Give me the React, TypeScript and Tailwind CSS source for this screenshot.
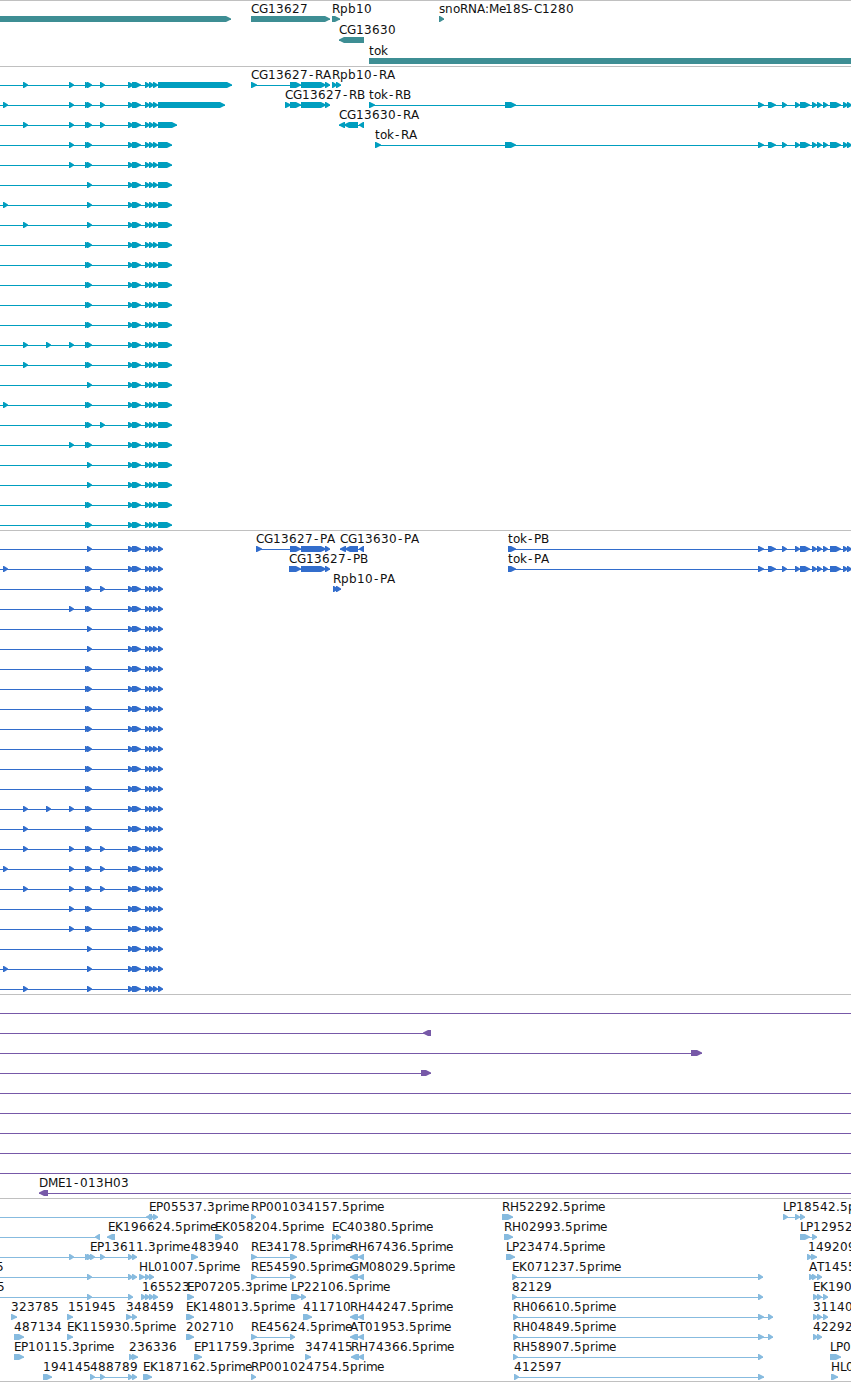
type Span = [number, number];

type Feature = {
  name?: string;
  at?: number;
  spans: Span[];
  reverse?: boolean;
  from?: number;
  to?: number;
  blunt?: boolean;
};

const VIEW = 851;

const ADVANCE: Record<string, number> = {
  C: 8, G: 9, R: 8, P: 7, A: 8, B: 8, N: 9, M: 10, S: 6, D: 9, E: 7, H: 9, K: 8, L: 6, T: 7,
  p: 8, b: 8, r: 5, i: 3, m: 11, e: 6, t: 5, o: 7, k: 7, s: 6, n: 8,
  ".": 4, ":": 4, "-": 7,
};

// letter positions on whole pixels
function positions(name: string, start: number) {
  let x = start;
  return [...name]
    .map((ch) => {
      const here = ch === "-" ? x + 1 : x;
      x += ADVANCE[ch] ?? 8;
      return here;
    })
    .join(" ");
}

function exonPath([a, b]: Span, reverse?: boolean, blunt?: boolean) {
  if (blunt) return `M${a} 14H${b}V20H${a}Z`;
  const tip = Math.min(b - a - 1, 5);
  if (reverse) return `M${b} 14H${a + tip}L${a} 16.5V17.5L${a + tip} 20H${b}Z`;
  return `M${a} 14H${b - tip}L${b} 16.5V17.5L${b - tip} 20H${a}Z`;
}

function Glyph({ feature }: { feature: Feature }) {
  const { name, at, spans, reverse, blunt } = feature;
  const from = feature.from ?? Math.min(...spans.map((s) => s[0]));
  const to = feature.to ?? Math.max(...spans.map((s) => s[1]));
  return (
    <g>
      <rect x={from} y={17} width={to - from} height={1} />
      {spans.map((span, i) => (
        <path key={i} d={exonPath(span, reverse, blunt)} />
      ))}
      {name && (
        <text x={positions(name, at ?? from)} y={11} className="fill-[#111] text-[12px]">
          {name}
        </text>
      )}
    </g>
  );
}

function Track({ rows, color, rowHeight = 20, className }: {
  rows: Feature[][];
  color: string;
  rowHeight?: number;
  className: string;
}) {
  return (
    <section className={`flex flex-col border-t border-[#c0c0c0] pt-px ${className}`}>
      {rows.map((features, i) => (
        <svg
          key={i}
          width={VIEW}
          height={rowHeight}
          className={`block shrink-0 overflow-visible ${color}`}
        >
          {features.map((feature, j) => (
            <Glyph key={j} feature={feature} />
          ))}
        </svg>
      ))}
    </section>
  );
}

const EXONS: Record<string, Span[]> = {
  a: [[3, 8]],
  b: [[23, 28]],
  c: [[46, 51]],
  d: [[69, 74]],
  D: [[85, 90], [87, 92]],
  S: [[87, 92]],
  e: [[100, 105]],
};

const CORE: Span[] = [[128, 134], [132, 141], [145, 150], [149, 154], [153, 158]];

function isoform(code: string, end: number): Feature {
  return { from: 0, spans: [...[...code].flatMap((c) => EXONS[c]), ...CORE, [158, end]] };
}

const TOK: Span[] = [
  [758, 764], [768, 776], [782, 787], [795, 800], [800, 810], [812, 817],
  [817, 822], [823, 828], [830, 841], [843, 848], [847, 852],
];

const CG13627: Span[] = [[290, 301], [301, 326], [325, 330]];

const genes: Feature[][] = [
  [
    { spans: [[0, 231]] },
    { name: "CG13627", spans: [[251, 330]] },
    { name: "Rpb10", spans: [[332, 340]] },
    { name: "snoRNA:Me18S-C1280", spans: [[439, 444]] },
  ],
  [{ name: "CG13630", spans: [[339, 364]], reverse: true }],
  [{ name: "tok", spans: [[369, VIEW]], blunt: true }],
];

const transcriptCodes = [
  "bdDe", "adDe", "bdDe", "dD", "dD", "S", "aS", "bS", "D", "D", "D", "D",
  "D", "bcdD", "bD", "S", "aD", "De", "dD", "S", "S", "D", "D",
];
const transcriptEnds = [232, 225, 177];
const transcripts: Feature[][] = transcriptCodes.map((code, i) => [
  isoform(code, transcriptEnds[i] ?? 172),
]);
transcripts[0].push(
  { name: "CG13627-RA", spans: [[251, 257], ...CG13627] },
  { name: "Rpb10-RA", spans: [[332, 337], [336, 341]] },
);
transcripts[1].push(
  { name: "CG13627-RB", spans: [[285, 291], ...CG13627] },
  { name: "tok-RB", spans: [[369, 375], [505, 516], ...TOK], to: VIEW },
);
transcripts[2].push({
  name: "CG13630-RA", spans: [[339, 345], [344, 358], [359, 364]], reverse: true,
});
transcripts[3].push({ name: "tok-RA", spans: [[375, 381], [505, 516], ...TOK], to: VIEW });

const proteinCodes = [
  "S", "aD", "De", "dD", "S", "S", "D", "D", "D", "D", "D", "D", "D",
  "bcdD", "bD", "bdDe", "adDe", "bdDe", "dD", "dD", "S", "aS", "bS",
];
const proteins: Feature[][] = proteinCodes.map((code) => [isoform(code, 163)]);
proteins[0].push(
  { name: "CG13627-PA", spans: [[256, 262], ...CG13627] },
  { name: "CG13630-PA", spans: [[340, 346], [345, 358], [359, 364]], reverse: true },
  { name: "tok-PB", spans: [[508, 516], ...TOK], to: VIEW },
);
proteins[1].push(
  { name: "CG13627-PB", spans: [[289, 301], [301, 326], [325, 330]] },
  { name: "tok-PA", spans: [[508, 516], ...TOK], to: VIEW },
);
proteins[2].push({ name: "Rpb10-PA", spans: [[333, 338], [336, 341]] });

const through: Feature = { spans: [], from: 0, to: VIEW };
const clones: Feature[][] = [
  [through],
  [{ from: 0, spans: [[423, 431]], reverse: true }],
  [{ from: 0, spans: [[691, 702]] }],
  [{ from: 0, spans: [[421, 431]] }],
  [through],
  [through],
  [through],
  [through],
  [through],
  [{ name: "DME1-013H03", spans: [[39, 48]], to: VIEW, reverse: true }],
];

const ests: Feature[][] = [
  [
    { from: 0, spans: [[146, 152]], reverse: true },
    { name: "EP05537.3prime", at: 149, spans: [[149, 154], [153, 158]] },
    { name: "RP001034157.5prime", spans: [[251, 256]] },
    { name: "RH52292.5prime", spans: [[502, 513]] },
    { name: "LP18542.5p", spans: [[783, 788], [795, 800], [800, 805]] },
  ],
  [
    { from: 0, spans: [[95, 100]], reverse: true },
    { name: "EK196624.5prime", at: 108, spans: [[107, 115]], reverse: true },
    { name: "EK058204.5prime", spans: [[215, 223]] },
    { name: "EC40380.5prime", spans: [[332, 337], [336, 341]] },
    { name: "RH02993.5prime", spans: [[504, 513]] },
    { name: "LP12952", spans: [[800, 810], [812, 817]] },
  ],
  [
    {
      name: "EP13611.3prime", at: 90, from: 0,
      spans: [[69, 74], [85, 90], [87, 92], [90, 95], [100, 105], [128, 133], [132, 137]],
    },
    { name: "483940", spans: [[191, 198]] },
    { name: "RE34178.5prime", spans: [[251, 257], [290, 297]] },
    { name: "RH67436.5prime", spans: [[350, 358], [358, 364]], reverse: true },
    { name: "LP23474.5prime", spans: [[506, 515]] },
    { name: "149209", at: 808, spans: [[807, 812], [811, 817]] },
  ],
  [
    { name: "5", at: -4, from: 0, spans: [[87, 92], [128, 133], [132, 137]] },
    { name: "HL01007.5prime", spans: [[139, 145], [145, 150], [149, 154]] },
    { name: "RE54590.5prime", spans: [[251, 257], [290, 296]] },
    { name: "GM08029.5prime", spans: [[350, 358], [358, 364]], reverse: true },
    { name: "EK071237.5prime", spans: [[512, 517], [758, 763]] },
    { name: "AT1455", spans: [[809, 814], [812, 817], [817, 822]] },
  ],
  [
    { name: "5", at: -3, from: 0, spans: [[87, 92], [128, 133]] },
    { name: "165523", at: 142, spans: [[141, 146], [145, 150], [149, 154], [153, 158]] },
    { name: "EP07205.3prime", spans: [[187, 194]] },
    { name: "LP22106.5prime", spans: [[291, 301], [301, 306]] },
    { name: "82129", spans: [[512, 517], [758, 763]] },
    { name: "EK190", spans: [[813, 818], [817, 822], [823, 828]] },
  ],
  [
    { name: "323785", spans: [[11, 17]] },
    { name: "151945", at: 68, spans: [[67, 73]] },
    { name: "348459", spans: [[126, 132], [132, 137]] },
    { name: "EK148013.5prime", spans: [[186, 194]] },
    { name: "411710", spans: [[303, 312]] },
    { name: "RH44247.5prime", spans: [[350, 358], [358, 364]], reverse: true },
    { name: "RH06610.5prime", spans: [[513, 518], [758, 764], [768, 773]] },
    { name: "31140", spans: [[813, 818], [817, 822], [823, 828]] },
  ],
  [
    { name: "487134", spans: [[14, 24]] },
    { name: "EK115930.5prime", spans: [[67, 73]] },
    { name: "202710", spans: [[186, 194]] },
    { name: "RE45624.5prime", spans: [[251, 257], [290, 295]] },
    { name: "AT01953.5prime", spans: [[350, 358], [358, 364]], reverse: true },
    { name: "RH04849.5prime", spans: [[513, 518], [758, 764], [768, 773]] },
    { name: "42292", spans: [[813, 818], [817, 822]] },
  ],
  [
    { name: "EP10115.3prime", spans: [[14, 24]] },
    { name: "236336", spans: [[129, 134], [132, 138]] },
    { name: "EP11759.3prime", spans: [[194, 202]] },
    { name: "347415", spans: [[305, 311]] },
    { name: "RH74366.5prime", spans: [[351, 359], [358, 364]], reverse: true },
    { name: "RH58907.5prime", spans: [[513, 518], [758, 763]] },
    { name: "LP0", spans: [[830, 841]] },
  ],
  [
    { name: "194145", spans: [[43, 52]] },
    { name: "488789", spans: [[90, 95], [100, 105], [128, 133], [132, 137]] },
    { name: "EK187162.5prime", spans: [[143, 152]] },
    { name: "RP001024754.5prime", spans: [[251, 256]] },
    { name: "412597", spans: [[514, 519], [758, 764]] },
    { name: "HL0", spans: [[831, 838]] },
  ],
];

export default function App() {
  return (
    <main className="flex h-[1382px] w-[851px] flex-col overflow-hidden bg-white font-['DejaVu_Sans',sans-serif]">
      <Track rows={genes} color="fill-[#3e8e94]" rowHeight={21} className="h-[66px]" />
      <Track rows={transcripts} color="fill-[#009ebf]" className="h-[464px]" />
      <Track rows={proteins} color="fill-[#326dcc]" className="h-[464px]" />
      <Track rows={clones} color="fill-[#7759a8]" className="h-[204px]" />
      <Track rows={ests} color="fill-[#87bbdf]" className="h-[184px] border-b" />
    </main>
  );
}
